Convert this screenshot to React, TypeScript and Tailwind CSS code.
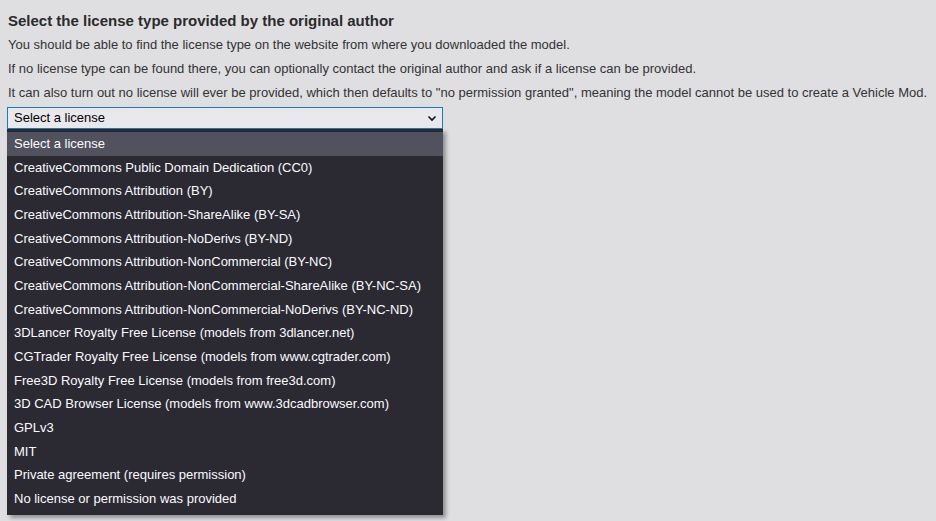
import React from 'react';

const licenses = [
  'Select a license',
  'CreativeCommons Public Domain Dedication (CC0)',
  'CreativeCommons Attribution (BY)',
  'CreativeCommons Attribution-ShareAlike (BY-SA)',
  'CreativeCommons Attribution-NoDerivs (BY-ND)',
  'CreativeCommons Attribution-NonCommercial (BY-NC)',
  'CreativeCommons Attribution-NonCommercial-ShareAlike (BY-NC-SA)',
  'CreativeCommons Attribution-NonCommercial-NoDerivs (BY-NC-ND)',
  '3DLancer Royalty Free License (models from 3dlancer.net)',
  'CGTrader Royalty Free License (models from www.cgtrader.com)',
  'Free3D Royalty Free License (models from free3d.com)',
  '3D CAD Browser License (models from www.3dcadbrowser.com)',
  'GPLv3',
  'MIT',
  'Private agreement (requires permission)',
  'No license or permission was provided',
];

const App = () => {
  return (
    <div className="min-h-[521px] bg-[#dfdfe1] px-2 pt-[12px] text-[#333] font-['Liberation_Sans',Arial,sans-serif]">
      <h3 className="text-[15px] font-bold leading-[18px] text-[#2b2b2b]">
        Select the license type provided by the original author
      </h3>
      <p className="mt-[3px] text-[13px] leading-[24px]">
        You should be able to find the license type on the website from where you downloaded the model.
      </p>
      <p className="text-[13px] leading-[24px]">
        If no license type can be found there, you can optionally contact the original author and ask if a license can be provided.
      </p>
      <p className="whitespace-nowrap text-[13px] leading-[24px]">
        It can also turn out no license will ever be provided, which then defaults to "no permission granted", meaning the model cannot be used to create a Vehicle Mod.
      </p>

      {/* Select with open listbox */}
      <div className="relative mt-[2px] w-[436px] -ml-px">
        <div className="flex h-[22px] items-center justify-between border border-[#1c7fb4] bg-[#e9e8ed] pl-[6px] pr-[4px] text-[13px] text-black">
          <span>Select a license</span>
          <svg width="10" height="10" viewBox="0 0 10 10" className="mr-[1px]">
            <path d="M1.5 3.5 L5 7 L8.5 3.5" fill="none" stroke="#111" strokeWidth="1.6" />
          </svg>
        </div>
        <ul className="absolute left-0 top-[22px] z-10 w-[436px] bg-[#2b2a33] pt-[3px] pb-[4px] shadow-[3px_3px_4px_rgba(0,0,0,0.35)]">
          {licenses.map((l, i) => (
            <li
              key={l}
              className={
                i === 0
                  ? 'flex h-[23.67px] items-center whitespace-nowrap bg-[#52525e] pl-[7px] text-[13px] text-[#fbfbfe]'
                  : 'flex h-[23.67px] items-center whitespace-nowrap pl-[7px] text-[13px] text-[#fbfbfe]'
              }
            >
              {l}
            </li>
          ))}
        </ul>
      </div>
    </div>
  );
};

export default App;
